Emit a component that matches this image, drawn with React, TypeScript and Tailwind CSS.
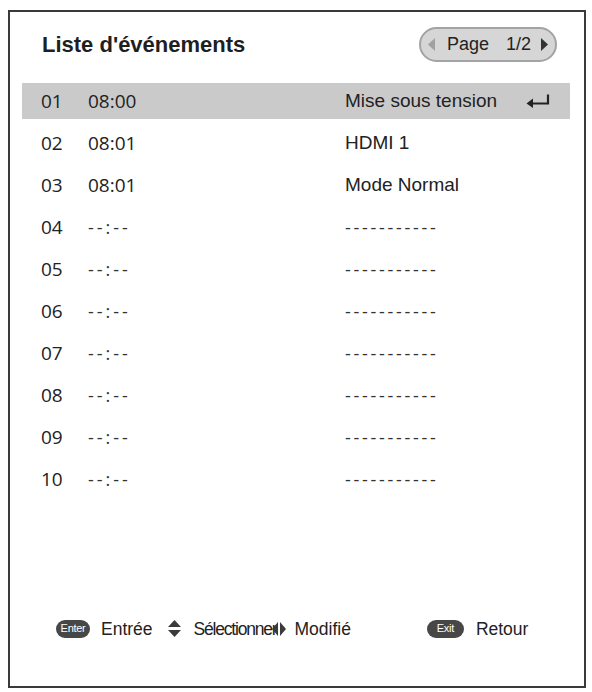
import React from 'react';

type Event = { no: string; time: string; label: string };

const EVENTS: Event[] = [
  { no: '01', time: '08:00', label: 'Mise sous tension' },
  { no: '02', time: '08:01', label: 'HDMI 1' },
  { no: '03', time: '08:01', label: 'Mode Normal' },
  { no: '04', time: '', label: '' },
  { no: '05', time: '', label: '' },
  { no: '06', time: '', label: '' },
  { no: '07', time: '', label: '' },
  { no: '08', time: '', label: '' },
  { no: '09', time: '', label: '' },
  { no: '10', time: '', label: '' },
];

const ARIAL = "font-['Liberation_Sans',Arial,sans-serif]";
const HUMANIST = "font-['Open_Sans','Noto_Sans',sans-serif]";

function ReturnArrow() {
  return (
    <svg width="24" height="14" viewBox="0 0 24 14" className="text-[#222]">
      <path d="M22 0.5 V9.5 H6" fill="none" stroke="currentColor" strokeWidth="2.2" />
      <path d="M0.5 9.5 L7 4.5 V14 Z" fill="currentColor" />
    </svg>
  );
}

function Badge({ children, w }: { children: React.ReactNode; w: string }) {
  return (
    <span
      className={`${w} h-[18px] rounded-full bg-[#474747] text-white text-[11px] leading-none flex items-center justify-center tracking-[-0.3px] ${ARIAL}`}
    >
      {children}
    </span>
  );
}

function UpDown() {
  return (
    <svg width="13" height="17" viewBox="0 0 13 17" className="text-[#3a3a3a]">
      <path d="M6.5 0 L13 7 H0 Z" fill="currentColor" />
      <path d="M0 10 H13 L6.5 17 Z" fill="currentColor" />
    </svg>
  );
}

function LeftRight() {
  return (
    <svg width="14" height="14" viewBox="0 0 14 14" className="text-[#3a3a3a]">
      <path d="M6 0 V14 L0 7 Z" fill="currentColor" />
      <path d="M8 0 L14 7 L8 14 Z" fill="currentColor" />
    </svg>
  );
}

function PagePill() {
  return (
    <div
      className={`w-[138px] h-[35px] rounded-full bg-[#d6d6d6] border-2 border-[#a3a3a3] flex items-center pl-[7px] pr-[7px] text-[18px] text-[#222] ${ARIAL}`}
    >
      <svg width="7" height="13" viewBox="0 0 7 13" className="text-[#a0a0a0]">
        <path d="M7 0 V13 L0 6.5 Z" fill="currentColor" />
      </svg>
      <span className="ml-[12px]">Page</span>
      <span className="ml-[17px]">1/2</span>
      <svg width="7" height="13" viewBox="0 0 7 13" className="ml-auto text-[#333]">
        <path d="M0 0 L7 6.5 L0 13 Z" fill="currentColor" />
      </svg>
    </div>
  );
}

export default function App() {
  return (
    <div className="w-[592px] h-[692px] bg-white overflow-hidden pt-[10px] pl-[8px]">
      <div className="w-[578px] h-[678px] border-2 border-[#3a3a3a] flex flex-col">
        {/* Header */}
        <div className="flex items-center justify-between pt-[15px] pl-[32px] pr-[27px]">
          <h1 className={`text-[22px] font-bold text-[#1f1f1f] leading-none ${ARIAL}`}>
            Liste d'événements
          </h1>
          <PagePill />
        </div>

        {/* Event rows */}
        <div className="mt-[21px] pl-[12px] pr-[14px] flex flex-col gap-[6px]">
          {EVENTS.map((ev, i) => (
            <div
              key={ev.no}
              className={`h-[36px] flex items-center pl-[19px] text-[#222] ${i === 0 ? 'bg-[#cacaca]' : ''}`}
            >
              <span className={`w-[47px] text-[19px] ${HUMANIST}`}>{ev.no}</span>
              {ev.time ? (
                <span className={`w-[257px] text-[19px] ${HUMANIST}`}>{ev.time}</span>
              ) : (
                <span className={`w-[257px] text-[18px] tracking-[3px] text-[#333] ${HUMANIST}`}>--:--</span>
              )}
              {ev.label ? (
                <span className={`text-[19px] ${ARIAL}`}>{ev.label}</span>
              ) : (
                <span className={`text-[18px] tracking-[2.7px] text-[#333] ${HUMANIST}`}>-----------</span>
              )}
              {i === 0 && (
                <span className="ml-auto mr-[20px] flex">
                  <ReturnArrow />
                </span>
              )}
            </div>
          ))}
        </div>

        {/* Key hints */}
        <div className={`mt-auto mb-[44px] pl-[46px] flex items-center text-[17.5px] text-[#222] ${ARIAL}`}>
          <Badge w="w-[34px]">Enter</Badge>
          <span className="ml-[11px]">Entrée</span>
          <span className="ml-[15px] flex">
            <UpDown />
          </span>
          <span className="ml-[13px] tracking-[-1.2px]">Sélectionner</span>
          <span className="-ml-[4px] flex">
            <LeftRight />
          </span>
          <span className="ml-[8px]">Modifié</span>
          <span className="ml-[76px]">
            <Badge w="w-[37px]">Exit</Badge>
          </span>
          <span className="ml-[12px]">Retour</span>
        </div>
      </div>
    </div>
  );
}
